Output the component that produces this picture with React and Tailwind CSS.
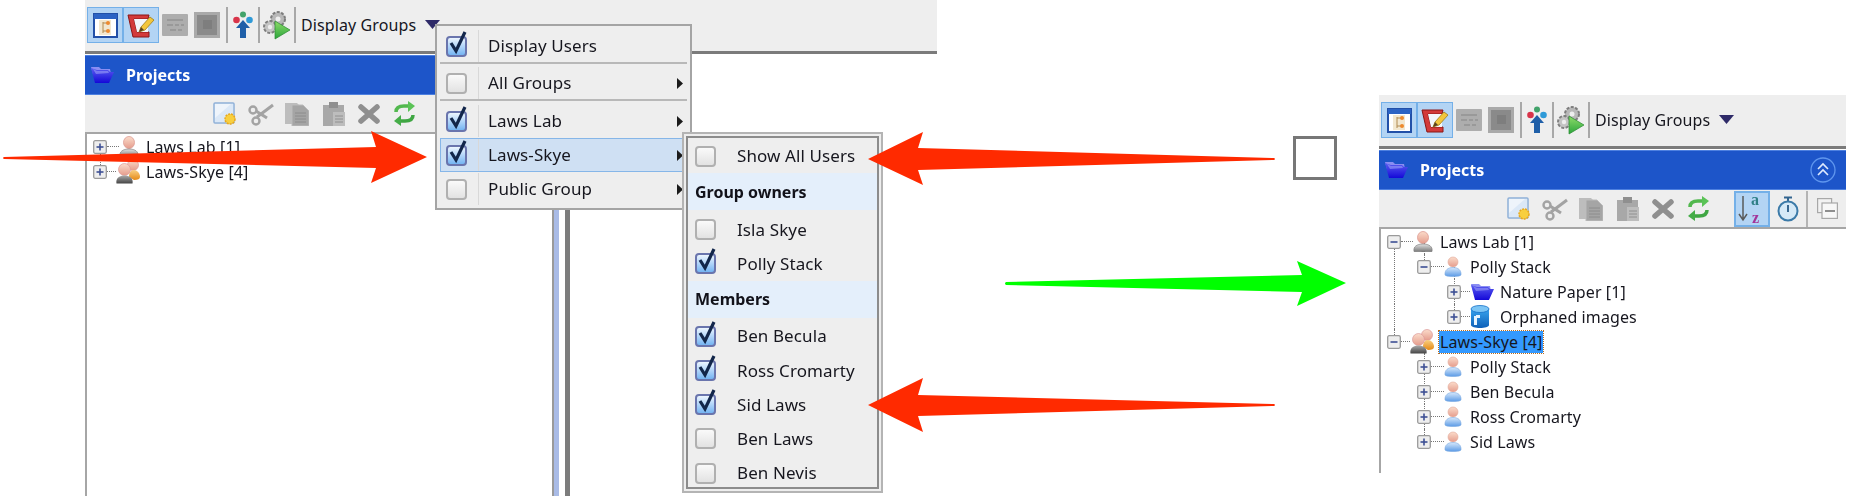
import React from "react";

const FONT = "font-['Noto_Sans','Open_Sans',sans-serif]";

function Grad({ id, from, to }) {
  return (
    <linearGradient id={id} x1="0" y1="0" x2="0" y2="1">
      <stop offset="0" stopColor={from} />
      <stop offset="1" stopColor={to} />
    </linearGradient>
  );
}

function Defs() {
  return (
    <svg width="0" height="0" className="absolute">
      <defs>
        <Grad id="head" from="#fbdccb" to="#e59c8c" />
        <Grad id="bodyBlue" from="#d6e8fb" to="#5c9be6" />
        <Grad id="bodyGray" from="#e2e2e2" to="#777777" />
        <Grad id="bodyDark" from="#aaaaaa" to="#444444" />
        <Grad id="bodyOrange" from="#f9cf82" to="#e58a16" />
        <Grad id="folder" from="#5b5df0" to="#1408d8" />
        <Grad id="cyl" from="#38a4ee" to="#0d5fb8" />
        <Grad id="green" from="#8fdc6a" to="#2aa53b" />
      </defs>
    </svg>
  );
}

function LabIcon() {
  return (
    <svg width="20" height="21" viewBox="0 0 20 21">
      <ellipse cx="10" cy="6.500" rx="5.500" ry="6" fill="url(#head)" stroke="#dd9c94" strokeWidth="0.800" />
      <path d="M1 20.500c-1-5 3-7.500 9-7.500s10 2.500 9 7.500c-2 .5-16 .5-18 0z" fill="url(#bodyGray)" stroke="#777" strokeWidth="0.600" />
    </svg>
  );
}

function GroupIcon() {
  return (
    <svg width="25" height="25" viewBox="0 0 25 25">
      <circle cx="17" cy="6" r="5.500" fill="url(#head)" stroke="#d99" strokeWidth="0.700" />
      <path d="M13 18c0-5 2-7 5-7s6 3 6 7c0 2-2 3-6 3z" fill="url(#bodyOrange)" />
      <circle cx="8.500" cy="10.500" r="6" fill="url(#head)" stroke="#d99" strokeWidth="0.700" />
      <path d="M0.500 24.500c-1-5 2.500-8 8-8s9 3 8 8z" fill="url(#bodyDark)" />
    </svg>
  );
}

function UserIcon() {
  return (
    <svg width="18" height="22" viewBox="0 0 18 22">
      <circle cx="9" cy="6" r="5" fill="url(#head)" stroke="#e0a898" strokeWidth="0.600" />
      <path d="M1 19c-.5-5 3-7.500 8-7.500s8.500 2.500 8 7.500c-1 2-15 2-16 0z" fill="url(#bodyBlue)" stroke="#7aa9e0" strokeWidth="0.600" />
    </svg>
  );
}

function FolderIcon() {
  return (
    <svg width="24" height="18" viewBox="0 0 24 18">
      <path d="M1 1h8l2 2h9l1 5H3z" fill="#8a8df2" />
      <path d="M1 2l4 15h14l5-11h-4L18 4H7z" fill="url(#folder)" />
      <path d="M3 3l4 2h11l1 2-13 1z" fill="#9a9cf6" opacity="0.600" />
    </svg>
  );
}

function CylinderIcon() {
  return (
    <svg width="20" height="24" viewBox="0 0 20 24">
      <path d="M1 4v16c0 4 18 4 18 0V4z" fill="url(#cyl)" />
      <ellipse cx="10" cy="4" rx="9" ry="3.500" fill="#7cc5f5" stroke="#1470c8" strokeWidth="0.800" />
      <path d="M4 11h3v9H4z" fill="#e7f4ff" />
      <path d="M6 10h4v3H6z" fill="#e7f4ff" />
    </svg>
  );
}

function Expander({ open }) {
  return (
    <svg width="14" height="14" viewBox="0 0 14 14" className="relative shrink-0">
      <rect x="0.700" y="0.700" width="12.600" height="12.600" rx="1.500" fill="#eeeeee" stroke="#9a9a9a" strokeWidth="1.300" />
      <path d="M3.500 7h7" stroke="#3d4f94" strokeWidth="1.600" />
      {!open && <path d="M7 3.500v7" stroke="#3d4f94" strokeWidth="1.600" />}
    </svg>
  );
}

function TreeRow({ depth, open, icon, conn, label, guides = [], selected }) {
  return (
    <div className="relative flex items-center h-[25px]" style={{ paddingLeft: depth * 30 }}>
      {guides.map(([col, kind]) => (
        <span
          key={col}
          className={`absolute w-0 border-l border-dotted border-[#777] ${
            kind === "f" ? "top-0 bottom-0" : kind === "t" ? "top-0 h-[12px]" : "bottom-0 h-[12px]"
          }`}
          style={{ left: 7 + col * 30 }}
        />
      ))}
      <Expander open={open} />
      <div className="relative flex items-center w-[39px] shrink-0">
        <span className="h-0 shrink-0 border-t border-dotted border-[#777]" style={{ width: conn }} />
        {icon}
      </div>
      <span
        className={`relative text-[16px] leading-[22px] tracking-[0.1px] whitespace-nowrap text-[#16161e] ${
          selected ? "bg-[#3399ff] outline-1 outline-dotted outline-[#b86a1a] -ml-[1px] px-[1px]" : ""
        }`}
      >
        {label}
      </span>
    </div>
  );
}

function ToolBtn({ active, children, className = "" }) {
  return (
    <div
      className={`flex items-center justify-center w-[36px] h-[36px] shrink-0 ${
        active ? "bg-[#b3d4f4] border border-[#74b0e8]" : ""
      } ${className}`}
    >
      {children}
    </div>
  );
}

function Sep() {
  return <div className="w-[2px] h-[36px] bg-[#a8a8a8] shrink-0" />;
}

function TreeViewIcon() {
  return (
    <svg width="25" height="25" viewBox="0 0 25 25">
      <rect x="1" y="1" width="23" height="23" fill="#fff" stroke="#2250a8" strokeWidth="2" />
      <rect x="1" y="1" width="23" height="5" fill="#2c63c4" />
      <rect x="6" y="7" width="12" height="15" fill="#f2e7cf" />
      <path d="M10 9v11M10 10h4M10 18h4" stroke="#b08a50" strokeWidth="1" fill="none" />
      <circle cx="15" cy="10" r="2" fill="#ee8a2e" />
      <circle cx="15" cy="18" r="2" fill="#ee8a2e" />
    </svg>
  );
}

function NotepadIcon() {
  return (
    <svg width="28" height="27" viewBox="0 0 28 27">
      <path d="M1 3l21 0-1 4-14 0 3 13 12 0 0 5-16 0z" fill="#d33a3a" stroke="#8a1616" strokeWidth="1" />
      <path d="M7 7h14v13H10z" fill="#f3f6fb" />
      <path d="M12 20l2-5L23 5l4 3-9 10z" fill="#f3c63c" stroke="#a07c18" strokeWidth="0.800" />
      <path d="M12 20l2-5 3 3z" fill="#5a4320" />
    </svg>
  );
}

function GrayGridIcon() {
  return (
    <svg width="26" height="22" viewBox="0 0 26 22">
      <rect width="26" height="22" rx="1" fill="#adadad" />
      <path d="M5 5h16v2H5zM5 10h6v2H5zM13 10h4v2h-4zM19 10h3v2h-3zM8 15h6v2H8zM16 15h4v2h-4z" fill="#999999" />
    </svg>
  );
}

function GraySquareIcon() {
  return (
    <svg width="26" height="26" viewBox="0 0 26 26">
      <rect width="26" height="26" fill="#a9a9a9" />
      <rect x="3" y="3" width="20" height="20" fill="#8a8a8a" />
      <rect x="9" y="8" width="9" height="9" fill="#7e7e7e" />
    </svg>
  );
}

function PeopleIcon() {
  return (
    <svg width="20" height="28" viewBox="0 0 20 28">
      <circle cx="10" cy="3.500" r="3" fill="#42a36a" />
      <circle cx="3.500" cy="9" r="3.300" fill="#d8344a" />
      <circle cx="16.500" cy="9" r="3.300" fill="#2f9ad8" />
      <path d="M10 9l7 8h-4v10H7V17H3z" fill="#1f5fa8" />
    </svg>
  );
}

function GearsPlayIcon() {
  return (
    <svg width="28" height="30" viewBox="0 0 28 30">
      <circle cx="15" cy="9" r="7" fill="#b8b8b8" stroke="#7d7d7d" strokeWidth="2" strokeDasharray="3 1.500" />
      <circle cx="15" cy="9" r="2.500" fill="#eee" />
      <circle cx="7" cy="17" r="6" fill="#c4c4c4" stroke="#808080" strokeWidth="2" strokeDasharray="3 1.500" />
      <circle cx="7" cy="17" r="2.200" fill="#eee" />
      <path d="M12 11l15 9-15 9z" fill="url(#green)" stroke="#2a8a30" strokeWidth="0.700" />
    </svg>
  );
}

function NewIcon() {
  return (
    <svg width="24" height="24" viewBox="0 0 24 24">
      <rect x="1" y="1" width="20" height="20" rx="1" fill="#eef4fb" stroke="#8fb0d8" strokeWidth="1.500" />
      <path d="M2 16L18 2h2v18H2z" fill="#dbe8f7" />
      <circle cx="17" cy="17" r="5" fill="#f8cf3e" stroke="#e8a71c" strokeWidth="1.500" strokeDasharray="2 1" />
    </svg>
  );
}

function ScissorsIcon() {
  return (
    <svg width="26" height="24" viewBox="0 0 26 24" fill="none" stroke="#a3a3a3">
      <path d="M9 15L25 3" strokeWidth="3" />
      <path d="M8 9l11 7" strokeWidth="3" />
      <circle cx="5" cy="8" r="3.500" strokeWidth="2.400" />
      <circle cx="8" cy="19" r="3.500" strokeWidth="2.400" />
    </svg>
  );
}

function CopyIcon() {
  return (
    <svg width="24" height="24" viewBox="0 0 24 24">
      <path d="M0 1h12l3 3v18H0z" fill="#bdbdbd" />
      <path d="M7 3h11l6 6v15H7z" fill="#a5a5a5" stroke="#bcbcbc" />
      <path d="M10 11h11M10 14h11M10 17h11M10 20h11" stroke="#8c8c8c" />
    </svg>
  );
}

function PasteIcon() {
  return (
    <svg width="24" height="25" viewBox="0 0 24 25">
      <path d="M1 4h21v21H1z" fill="#a8a8a8" />
      <path d="M7 1h9v6H7z" fill="#8f8f8f" />
      <path d="M11 11h12v14H11z" fill="#bdbdbd" />
      <path d="M13 15h8M13 18h8M13 21h8" stroke="#909090" />
    </svg>
  );
}

function CrossIcon() {
  return (
    <svg width="22" height="20" viewBox="0 0 22 20">
      <path d="M3 3l16 14M19 3L3 17" stroke="#8f8f8f" strokeWidth="5.500" strokeLinecap="round" />
    </svg>
  );
}

function RefreshIcon() {
  return (
    <svg width="23" height="25" viewBox="0 0 23 25" fill="none">
      <path d="M3 11c0-5 4-6 8-6h5" stroke="#52b84e" strokeWidth="3.500" />
      <path d="M15 0l7 5-7 6z" fill="#5ac356" />
      <path d="M20 14c0 5-4 6-8 6H7" stroke="#3fa643" strokeWidth="3.500" />
      <path d="M8 14l-7 6 7 5z" fill="#45ad48" />
    </svg>
  );
}

function ClockIcon() {
  return (
    <svg width="22" height="26" viewBox="0 0 22 26" fill="none">
      <path d="M7 1.500h8M11 2v3" stroke="#33658f" strokeWidth="2" />
      <circle cx="11" cy="15" r="9.500" fill="#d5e9f7" stroke="#3b7aa8" strokeWidth="2" />
      <path d="M11 9v7" stroke="#275a85" strokeWidth="1.800" />
    </svg>
  );
}

function CollapseIcon() {
  return (
    <svg width="21" height="21" viewBox="0 0 21 21" fill="none" stroke="#a8a8a8" strokeWidth="1.200">
      <rect x="0.600" y="0.600" width="14" height="14" fill="#f2f2f2" />
      <rect x="5" y="5" width="15.400" height="15.400" fill="#f7f7f7" />
      <path d="M8 13h10" strokeWidth="2" stroke="#8e8e8e" />
    </svg>
  );
}

function Toolbar() {
  return (
    <div className={`h-[51px] bg-[#eeeeee] flex items-start pt-[7px] pl-[2px] ${FONT}`}>
      <div className="flex">
        <ToolBtn active><TreeViewIcon /></ToolBtn>
        <ToolBtn active><NotepadIcon /></ToolBtn>
      </div>
      <ToolBtn className="-ml-[2px]"><GrayGridIcon /></ToolBtn>
      <ToolBtn className="-ml-[4px]"><GraySquareIcon /></ToolBtn>
      <div className="ml-[1px]"><Sep /></div>
      <ToolBtn className="-ml-[3px]"><PeopleIcon /></ToolBtn>
      <div className="-ml-[3px]"><Sep /></div>
      <div className="w-[34px] h-[36px] flex items-center justify-center shrink-0"><GearsPlayIcon /></div>
      <Sep />
      <span className="ml-[5px] h-[36px] flex items-center text-[16px] tracking-[0.1px] text-[#16161e] whitespace-nowrap">Display Groups</span>
      <svg width="15" height="9" viewBox="0 0 15 9" className="ml-[9px] mt-[13px]">
        <path d="M0 0h15l-7.500 9z" fill="#2e2a68" />
      </svg>
    </div>
  );
}

function Pane({ rows, extras }) {
  return (
    <div className={`w-[467px] flex flex-col shrink-0 self-stretch ${FONT}`}>
      <div className="h-[40px] bg-[#1d55c9] border-y border-[#4d80e0] flex items-center pl-[5px]">
        <FolderIcon />
        <span className="ml-[12px] text-[16px] font-bold text-white">Projects</span>
        {extras && (
          <svg width="26" height="26" viewBox="0 0 26 26" fill="none" className="ml-auto mr-[10px]">
            <circle cx="13" cy="13" r="12" stroke="#5f96ee" strokeWidth="1.300" />
            <path d="M8 12l5-5 5 5M8 18l5-5 5 5" stroke="#dfeafd" strokeWidth="1.600" />
          </svg>
        )}
      </div>
      <div className="h-[37px] bg-[#eeeeee] flex items-center pl-[128px]">
        <div className="flex items-center w-[24px]"><NewIcon /></div>
        <div className="flex items-center ml-[11px] w-[26px]"><ScissorsIcon /></div>
        <div className="flex items-center ml-[11px] w-[24px]"><CopyIcon /></div>
        <div className="flex items-center ml-[13px] w-[24px]"><PasteIcon /></div>
        <div className="flex items-center ml-[12px] w-[22px]"><CrossIcon /></div>
        <div className="flex items-center ml-[13px] w-[23px]"><RefreshIcon /></div>
        {extras && (
          <>
            <div className="ml-[24px] w-[36px] h-[36px] -mb-[1px] bg-[#b3d4f4] border-2 border-[#74b0e8] relative shrink-0">
              <svg width="32" height="37" viewBox="0 0 32 37" className="-mt-[3px] overflow-visible">
                <path d="M7 6v23M3 24l4 6 4-6" stroke="#5a5a5a" strokeWidth="1.500" fill="none" />
                <text x="15" y="15" fontSize="16" fontWeight="700" fontFamily="Liberation Serif, serif" fill="#2f7f86">a</text>
                <text x="16" y="33" fontSize="16" fontWeight="700" fontFamily="Liberation Serif, serif" fill="#a3359a">z</text>
              </svg>
            </div>
            <div className="ml-[7px] flex items-center w-[22px]"><ClockIcon /></div>
            <div className="ml-[7px] w-[2px] h-[36px] bg-[#b4b4b4]" />
            <div className="ml-[9px] flex items-center w-[21px]"><CollapseIcon /></div>
          </>
        )}
      </div>
      <div className="flex-1 bg-white border-t-2 border-l-2 border-[#a6a6a6] pl-[6px]">
        {rows}
      </div>
    </div>
  );
}

function Check({ checked }) {
  return (
    <span
      className={`relative block w-[21px] h-[21px] rounded-[4px] border-2 shrink-0 ${
        checked
          ? "border-[#6a75ad] bg-gradient-to-b from-[#ecf5fe] to-[#74b4f2]"
          : "border-[#b0b0b0] bg-gradient-to-b from-[#fafafa] to-[#e2e2e2]"
      }`}
    >
      {checked && (
        <svg width="22" height="25" viewBox="0 0 22 25" className="absolute -top-[8px] -left-[1px]">
          <path d="M4 13l5 8L18 2" stroke="#12264a" strokeWidth="3.200" fill="none" />
        </svg>
      )}
    </span>
  );
}

function MenuRow({ checked, label, arrow, active }) {
  return (
    <div
      className={`flex items-center h-[34px] border ${
        active ? "bg-[#cfe0f3] border-[#86b6e8]" : "border-transparent"
      }`}
    >
      <div className="w-[38px] h-full flex items-center pl-[5px] border-r border-[#d8d8d8] shrink-0">
        <Check checked={checked} />
      </div>
      <span className="ml-[9px] text-[17px] tracking-[0.1px] text-[#16161e] whitespace-nowrap">{label}</span>
      {arrow && (
        <svg width="6" height="11" viewBox="0 0 6 11" className="ml-auto mr-[3px]">
          <path d="M0 0l6 5.500L0 11z" fill="#1b1b1b" />
        </svg>
      )}
    </div>
  );
}

function MenuSep({ h }) {
  return (
    <div className={`${h} flex flex-col justify-start`}>
      <div className="h-[2px] -mt-[1px] bg-[#b8b8b8]" />
    </div>
  );
}

function SubCheck({ checked, label }) {
  return (
    <div className="flex items-center h-[34.300px] pl-[7px]">
      <Check checked={checked} />
      <span className="ml-[21px] text-[17px] tracking-[0.1px] text-[#16161e] whitespace-nowrap">{label}</span>
    </div>
  );
}

function SubHead({ label }) {
  return (
    <div className="flex items-center h-[37px] pl-[7px] bg-[#e4effb] text-[16px] font-bold text-[#12121a]">
      {label}
    </div>
  );
}

const lab = <LabIcon />;
const group = <GroupIcon />;
const user = <UserIcon />;

const leftRows = (
  <>
    <TreeRow depth={0} icon={lab} conn={12} label="Laws Lab [1]" guides={[[0, "b"]]} />
    <TreeRow depth={0} icon={group} conn={9} label="Laws-Skye [4]" guides={[[0, "t"]]} />
  </>
);

const rightRows = (
  <>
    <TreeRow depth={0} open icon={lab} conn={12} label="Laws Lab [1]" guides={[[0, "b"], [1, "b"]]} />
    <TreeRow depth={1} open icon={user} conn={13} label="Polly Stack" guides={[[0, "f"], [1, "t"], [2, "b"]]} />
    <TreeRow depth={2} icon={<FolderIcon />} conn={9} label="Nature Paper [1]" guides={[[0, "f"], [2, "f"]]} />
    <TreeRow depth={2} icon={<CylinderIcon />} conn={9} label="Orphaned images" guides={[[0, "f"], [2, "t"]]} />
    <TreeRow depth={0} open selected icon={group} conn={9} label="Laws-Skye [4]" guides={[[0, "t"], [1, "b"]]} />
    <TreeRow depth={1} icon={user} conn={13} label="Polly Stack" guides={[[1, "f"]]} />
    <TreeRow depth={1} icon={user} conn={13} label="Ben Becula" guides={[[1, "f"]]} />
    <TreeRow depth={1} icon={user} conn={13} label="Ross Cromarty" guides={[[1, "f"]]} />
    <TreeRow depth={1} icon={user} conn={13} label="Sid Laws" guides={[[1, "t"]]} />
  </>
);

function Arrows() {
  return (
    <svg width="1849" height="496" viewBox="0 0 1849 496" className="absolute inset-0 pointer-events-none">
      <path d="M4 157L376 147L371 131L427 157L371 183L376 168L4 159Q2 158 4 157Z" fill="#ff2a00" />
      <path d="M1274 158L918 148L923 132L868 159L923 185L918 170L1274 160Q1276 159 1274 158Z" fill="#ff2a00" />
      <path d="M1274 404L918 395L923 378L868 405L923 432L918 416L1274 406Q1276 405 1274 404Z" fill="#ff2a00" />
      <path d="M1006 282L1302 275L1297 261L1346 283L1297 306L1302 292L1006 285Q1004 283.500 1006 282Z" fill="#00ff00" />
    </svg>
  );
}

export default function App() {
  return (
    <div className="relative w-[1849px] h-[496px] overflow-hidden bg-white">
      <Defs />
      <div className="flex h-full blur-[0.5px]">
        <div className="ml-[85px] w-[852px] h-full flex flex-col shrink-0">
          <Toolbar />
          <div className="h-[3px] bg-[#7b7b7b] mb-[1px]" />
          <div className="flex flex-1">
            <Pane rows={leftRows} />
            <div className="w-[7px] bg-[#a9bbe6] border-l-2 border-[#9a9a9a] shrink-0" />
            <div className="w-[5px] ml-[6px] bg-[#7c7c7c] shrink-0" />
          </div>
        </div>
        <div className="ml-[442px] mt-[95px] w-[467px] h-[378px] flex flex-col shrink-0">
          <Toolbar />
          <div className="h-[3px] bg-[#7b7b7b] mb-[1px]" />
          <div className="flex flex-1">
            <Pane rows={rightRows} extras />
          </div>
        </div>
      </div>

      <div className={`absolute left-[435px] top-[24px] w-[257px] h-[186px] border-2 border-[#a4a4a4] bg-[#eeeeee] pt-[3px] px-[3px] blur-[0.5px] ${FONT}`}>
        <MenuRow checked label="Display Users" />
        <MenuSep h="h-[3px]" />
        <MenuRow label="All Groups" arrow />
        <MenuSep h="h-[4px]" />
        <MenuRow checked label="Laws Lab" arrow />
        <MenuRow checked label="Laws-Skye" arrow active />
        <MenuRow label="Public Group" arrow />
      </div>

      <div className={`absolute left-[682px] top-[132px] w-[201px] h-[361px] border-2 border-[#b4b4b4] bg-[#eeeeee] p-[2px] blur-[0.5px] ${FONT}`}>
        <div className="h-full border-2 border-[#8c8c8c] pt-[1px]">
          <SubCheck label="Show All Users" />
          <SubHead label="Group owners" />
          <div className="h-[2px]" />
          <SubCheck label="Isla Skye" />
          <SubCheck checked label="Polly Stack" />
          <SubHead label="Members" />
          <div className="h-[1px]" />
          <SubCheck checked label="Ben Becula" />
          <SubCheck checked label="Ross Cromarty" />
          <SubCheck checked label="Sid Laws" />
          <SubCheck label="Ben Laws" />
          <SubCheck label="Ben Nevis" />
        </div>
      </div>

      <div className="absolute left-[1293px] top-[136px] w-[44px] h-[44px] border-[3px] border-[#777777] bg-white" />
      <Arrows />
    </div>
  );
}
